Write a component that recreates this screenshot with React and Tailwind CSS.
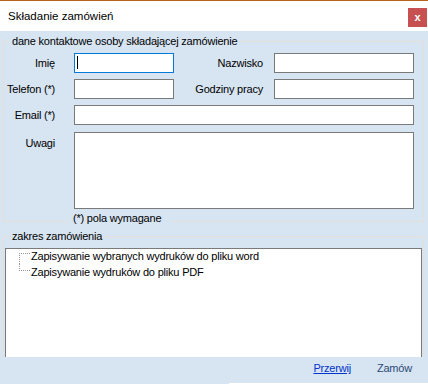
export default function App() {
  const inputCls = "h-[20px] bg-white border border-[#7a7a7a]";
  return (
    <div className="w-[428px] h-[384px] flex flex-col bg-[#d7e4f2] font-['Liberation_Sans',Arial,sans-serif] text-[11px] leading-[13px] tracking-[-0.2px] text-black overflow-hidden">
      <div className="h-[1px] bg-[#b9621c]" />
      <div className="h-[30px] bg-white flex items-start justify-between">
        <span className="ml-[8px] mt-[8px] text-[11.5px] leading-[15px] tracking-normal">Składanie zamówień</span>
        <div className="mt-[7px] mr-[1px] w-[19px] h-[19px] bg-[#c75050] text-white font-bold flex items-center justify-center text-[11px] leading-[11px]">x</div>
      </div>
      <div className="flex-1 flex flex-col">
        <fieldset className="relative mt-[4px] ml-[3px] w-[421px] border border-[#e4dfd8] pt-[5px] pb-[12px]">
          <legend className="ml-[6px] px-[2px] leading-[13px]">dane kontaktowe osoby składającej zamówienie</legend>
          <div className="flex items-center h-[20px]">
            <div className="w-[51px] text-right">Imię</div>
            <div className="ml-[19px] w-[100px] h-[20px] bg-white border border-[#0078d7] flex items-start">
              <div className="ml-[2px] mt-[2px] w-[1px] h-[13px] bg-black" />
            </div>
            <div className="w-[89px] text-right">Nazwisko</div>
            <div className={`ml-[11px] w-[140px] ${inputCls}`} />
          </div>
          <div className="flex items-center h-[20px] mt-[6px]">
            <div className="w-[51px] text-right whitespace-nowrap">Telefon (*)</div>
            <div className={`ml-[19px] w-[100px] ${inputCls}`} />
            <div className="w-[89px] text-right">Godziny pracy</div>
            <div className={`ml-[11px] w-[140px] ${inputCls}`} />
          </div>
          <div className="flex items-center h-[20px] mt-[6px]">
            <div className="w-[51px] text-right">Email (*)</div>
            <div className={`ml-[19px] w-[340px] ${inputCls}`} />
          </div>
          <div className="flex items-start mt-[7px]">
            <div className="w-[51px] text-right pt-[5px]">Uwagi</div>
            <div className="ml-[19px] w-[340px] h-[77px] bg-white border border-[#7a7a7a]" />
          </div>
          <div className="absolute left-[63px] bottom-[-4px] pl-[6px] pr-[10px] bg-[#d7e4f2] leading-[13px]">(*) pola wymagane</div>
        </fieldset>
        <fieldset className="mt-[8px] ml-[3px] w-[421px] border border-b-0 border-[#e4dfd8] pt-[5px]">
          <legend className="ml-[6px] px-[2px] leading-[13px]">zakres zamówienia</legend>
          <div className="ml-[1px] w-[417px] h-[109px] bg-white border-l border-t border-r border-[#7a7a7a]">
            <div className="-mt-[1px] flex flex-col">
              <div className="flex h-[16px] items-center">
                <svg width="25" height="16" className="shrink-0 self-start" shapeRendering="crispEdges">
                  <line x1="13" y1="5.5" x2="24" y2="5.5" stroke="#9a9a9a" strokeDasharray="1 1" />
                  <line x1="13.5" y1="5" x2="13.5" y2="16" stroke="#9a9a9a" strokeDasharray="1 1" />
                </svg>
                <span className="leading-[16px]">Zapisywanie wybranych wydruków do pliku word</span>
              </div>
              <div className="flex h-[16px] items-center">
                <svg width="25" height="16" className="shrink-0 self-start" shapeRendering="crispEdges">
                  <line x1="13.5" y1="0" x2="13.5" y2="7" stroke="#9a9a9a" strokeDasharray="1 1" />
                  <line x1="13" y1="6.5" x2="24" y2="6.5" stroke="#9a9a9a" strokeDasharray="1 1" />
                </svg>
                <span className="leading-[16px]">Zapisywanie wydruków do pliku PDF</span>
              </div>
            </div>
          </div>
        </fieldset>
        <div className="h-[26px] flex justify-end items-start pt-[5px] pr-[16px] gap-[26px]">
          <span className="text-[#0033cc] underline">Przerwij</span>
          <span className="text-[#2c4a78]">Zamów</span>
        </div>
        <div className="h-[1px] flex">
          <div className="ml-[229px] flex-1 bg-white" />
        </div>
      </div>
    </div>
  );
}
